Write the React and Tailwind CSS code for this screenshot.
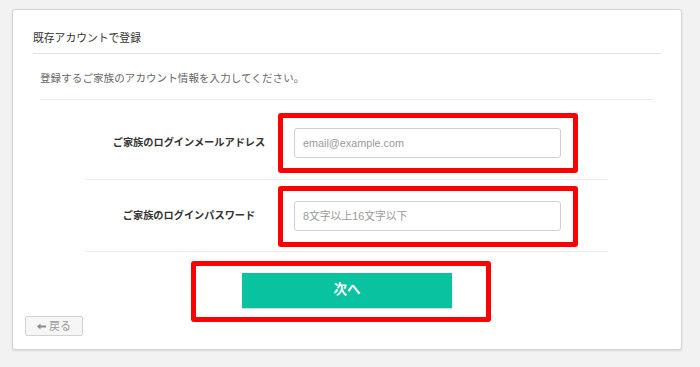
import React from "react";

const FONT = { fontFamily: '"Liberation Sans", "Noto Sans CJK JP", sans-serif' };

export default function App() {
  return (
    <div className="w-[700px] h-[367px] bg-[#f2f2f2] pt-[9px] pl-[12px]" style={FONT}>
      <div className="w-[670px] h-[341px] bg-white border border-[#d4d4d4] rounded-[3px] shadow-[0_1px_2px_rgba(0,0,0,0.12)] flex flex-col">
        <div className="mx-[20px] pt-[20px] pb-[7px] border-b border-[#e2e2e2]">
          <div className="text-[10.8px] leading-[16px] text-[#333]">既存アカウントで登録</div>
        </div>
        <div className="mx-[27px] pt-[16px] pb-[13px] border-b border-[#ececec]">
          <div className="text-[10.5px] tracking-[0.1px] leading-[16px] text-[#666]">登録するご家族のアカウント情報を入力してください。</div>
        </div>
        <div className="ml-[71px] w-[524px]">
          <div className="grid grid-cols-[210px_1fr] items-center pt-[28px] pb-[21px] border-b border-[#ececec]">
            <div className="text-center text-[10.2px] font-bold text-[#333]">ご家族のログインメールアドレス</div>
            <div className="relative w-[267px] h-[30px]">
              <input
                className="w-full h-full border border-[#cfcfcf] rounded-[3px] px-[8px] text-[10.8px] placeholder:text-[#9a9a9a] outline-none"
                placeholder="email@example.com"
                style={FONT}
              />
              <div className="absolute left-[-16px] top-[-15px] right-[-17px] bottom-[-15px] border-[5px] border-[#ff0000] rounded-[3px] pointer-events-none" />
            </div>
          </div>
          <div className="grid grid-cols-[210px_1fr] items-center pt-[21px] pb-[20px] border-b border-[#ececec]">
            <div className="text-center text-[10.2px] font-bold text-[#333]">ご家族のログインパスワード</div>
            <div className="relative w-[267px] h-[30px]">
              <input
                className="w-full h-full border border-[#cfcfcf] rounded-[3px] px-[8px] text-[10.8px] placeholder:text-[#9a9a9a] outline-none"
                placeholder="8文字以上16文字以下"
                style={FONT}
              />
              <div className="absolute left-[-16px] top-[-15px] right-[-17px] bottom-[-16px] border-[5px] border-[#ff0000] rounded-[3px] pointer-events-none" />
            </div>
          </div>
        </div>
        <div className="mt-[21px] relative w-[210px] h-[35px] ml-[229px]">
          <button className="w-full h-full bg-[#09c3a0] text-white text-[13.5px] font-bold shadow-[0_1px_1px_rgba(0,0,0,0.15)]" style={FONT}>
            次へ
          </button>
          <div className="absolute left-[-51px] top-[-12px] right-[-39px] bottom-[-14px] border-[5px] border-[#ff0000] rounded-[3px] pointer-events-none" />
        </div>
        <div className="mt-[8px] ml-[12px]">
          <button className="w-[58px] h-[20px] border border-[#d2d2d2] rounded-[2px] bg-[#f6f6f6] flex items-center justify-center gap-[3px] text-[11px] text-[#9a9a9a]" style={FONT}>
            <svg width="9" height="7" viewBox="0 0 9 7">
              <path d="M0 3.5 L3.5 0.5 L3.5 2.5 L9 2.5 L9 4.5 L3.5 4.5 L3.5 6.5 Z" fill="#8a8a8a" />
            </svg>
            <span>戻る</span>
          </button>
        </div>
      </div>
    </div>
  );
}
